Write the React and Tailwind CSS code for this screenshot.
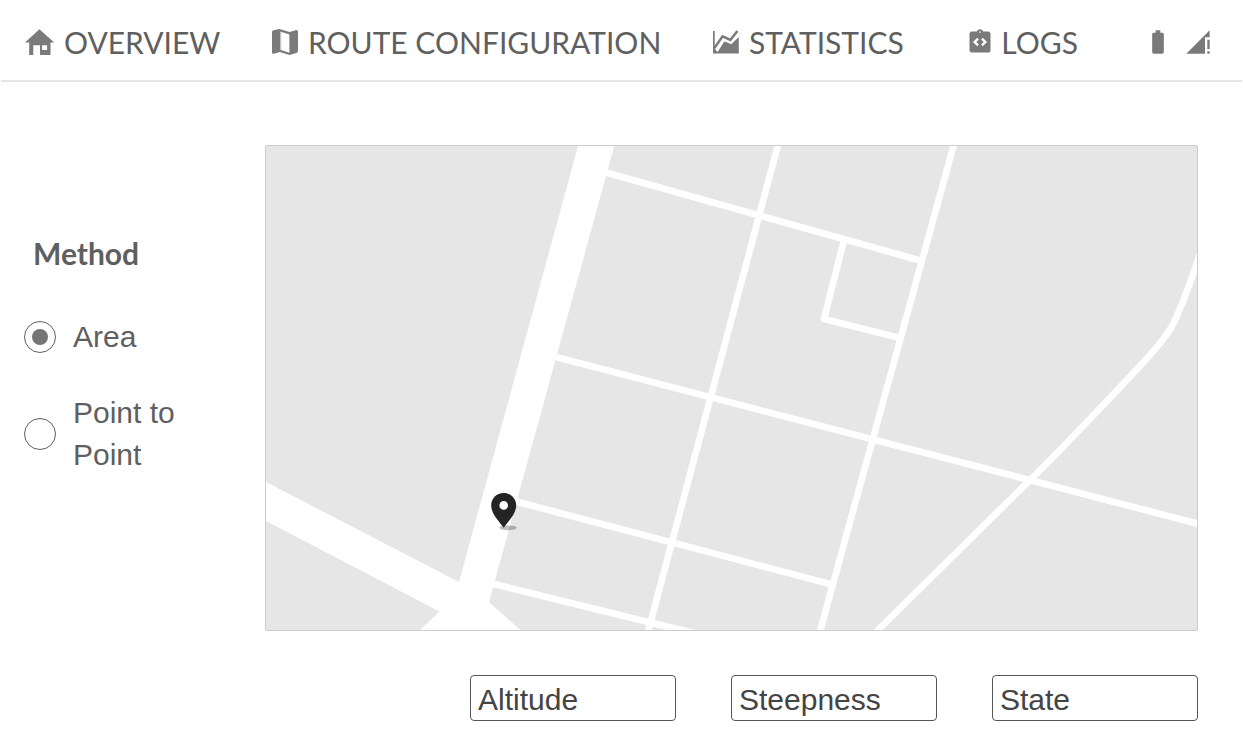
import { MdBatteryFull, MdIntegrationInstructions, MdSignalCellularConnectedNoInternet4Bar } from "react-icons/md";

function HomeIcon() {
  return (
    <svg viewBox="0 -1 30 30" className="size-[30px] shrink-0" fill="currentColor" aria-hidden="true">
      <path
        fillRule="evenodd"
        d="M14.4 1.3 29.2 14.6H25.5V27H15V17.2H8.3V27H4.2V14.6H0ZM17.1 17.2V22H22.1V17.2Z"
      />
    </svg>
  );
}

function MapIcon() {
  return (
    <svg viewBox="0 -1 28 30" className="h-[30px] w-7 shrink-0" fill="currentColor" aria-hidden="true">
      <path
        fillRule="evenodd"
        d="M1 4Q1 2.6 2.4 2.2L8.6 1 18.6 4 24.6 2.2Q27 1.6 27 3.6V22.8Q27 24.4 25.4 24.9L18.4 27 8.8 24 3 25.8Q1 26.2 1 24.4ZM9.2 3.6V21.8L18.4 24.8V6.4Z"
      />
      <path d="M9.2 3.6 10.4 4V22.2L9.2 21.8Z" opacity=".35" />
    </svg>
  );
}

function ChartIcon() {
  return (
    <svg viewBox="0 -1 28 30" className="h-[30px] w-7 shrink-0" fill="none" aria-hidden="true">
      <path fill="currentColor" d="M1 3H2.7V21L5 22.6 12 12.500 18.5 15 26.800 9V25.600H1Z" />
      <path stroke="white" strokeWidth="2.2" d="M4.800 23.200 12 12 19 15 27.600 6.500" />
      <path stroke="currentColor" strokeWidth="2.5" d="M2.200 20.400 10.600 8.400 18.400 12 25.400 3" />
    </svg>
  );
}

const links = [
  { label: "OVERVIEW", icon: <HomeIcon />, style: "gap-[9px]" },
  { label: "ROUTE CONFIGURATION", icon: <MapIcon />, style: "gap-[9px]" },
  { label: "STATISTICS", icon: <ChartIcon />, style: "gap-[9px]" },
  {
    label: "LOGS",
    icon: <MdIntegrationInstructions className="size-7 shrink-0" />,
    style: "gap-[7px] pl-3",
  },
];

function Header() {
  return (
    <header className="mx-px flex items-center justify-between border-b-2 border-[#e6e6e6] pt-1 pr-[30px] pl-6 font-['Lato',sans-serif] text-[30px] leading-[76px] text-[#5f5f5f]">
      <nav aria-label="Main" className="flex grow items-center justify-between">
        {links.map((link) => (
          <a key={link.label} href="#" className={`flex items-center whitespace-nowrap ${link.style}`}>
            <span className="text-[#7a7a7a]">{link.icon}</span>
            {link.label}
          </a>
        ))}
      </nav>
      <div className="ml-[66px] flex items-center gap-3 text-[#7a7a7a]">
        <MdBatteryFull className="size-7" />
        <MdSignalCellularConnectedNoInternet4Bar className="size-7" />
      </div>
    </header>
  );
}

function MethodOption({ label, value, checked }) {
  return (
    <label className="flex items-center gap-[17px]">
      <input
        type="radio"
        name="method"
        value={value}
        defaultChecked={checked}
        className="grid size-8 shrink-0 appearance-none place-content-center rounded-full border border-[#5f5f5f] before:size-4 before:rounded-full checked:before:bg-[#757575]"
      />
      <span>{label}</span>
    </label>
  );
}

function StreetMap() {
  return (
    <div className="overflow-hidden rounded-xs border border-[#cccccc] bg-[#e6e6e6]">
      <svg viewBox="266 146 931 484" className="block w-full" role="img" aria-label="Street map">
        <path fill="white" d="M578 146H614.3L489 602 520.5 630H420L439.5 611.5 266 521V482L459 582Z" />
        <g fill="none" stroke="white" strokeWidth="6.7">
          <path d="M605 172.2 920 260.4" />
          <path d="M554 356.5 873 439.5 1199 524" />
          <path d="M516 501.5 832 584.5" />
          <path d="M492 583.5 651 622.8 698 634" />
          <path d="M778.5 143 647.7 633" />
          <path d="M954.3 143 819.5 633" />
          <path strokeLinejoin="round" d="M844 240 824 319 900 338" />
          <path d="M1200 254C1190 284 1181 310 1171 328 1160 346 1137 369 1108 400 1082 427 1057 454 1030 480L875 633" />
        </g>
        <ellipse cx="508" cy="527.8" rx="8.8" ry="2.4" fill="#000" opacity=".25" />
        <path
          fill="#242424"
          fillRule="evenodd"
          d="M503.7 493C496.6 493 491.2 498.5 491.2 505.3 491.2 514 499 521 503.7 527.8 508.4 521 516.2 514 516.2 505.3 516.2 498.5 510.8 493 503.7 493ZM503.7 501.1A4.3 4.3 0 1 1 503.7 509.7 4.3 4.3 0 0 1 503.7 501.1Z"
        />
      </svg>
    </div>
  );
}

export default function App() {
  return (
    <div className="min-h-screen bg-white font-['Liberation_Sans',Arial,sans-serif] text-[30px] text-[#5f5f5f]">
      <Header />
      <main className="flex pt-[63px] pr-[45px] pb-7">
        <fieldset
          aria-labelledby="method-title"
          className="w-[265px] shrink-0 pt-[87px] pr-16 pl-6 leading-[42px]"
        >
          <h2 id="method-title" className="pl-[9px] font-['Lato',sans-serif] font-bold">
            Method
          </h2>
          <div className="mt-[42px] flex flex-col gap-[34px]">
            <MethodOption label="Area" value="area" checked />
            <MethodOption label="Point to Point" value="point" />
          </div>
        </fieldset>
        <section className="min-w-0 grow">
          <StreetMap />
          <form className="mt-11 flex justify-end gap-[55px]">
            {["Altitude", "Steepness", "State"].map((name) => (
              <input
                key={name}
                type="text"
                placeholder={name}
                aria-label={name}
                className="h-[46px] w-[206px] rounded border border-[#555555] pt-1 pl-[7px] text-[#444444] placeholder:text-[#444444]"
              />
            ))}
          </form>
        </section>
      </main>
    </div>
  );
}
